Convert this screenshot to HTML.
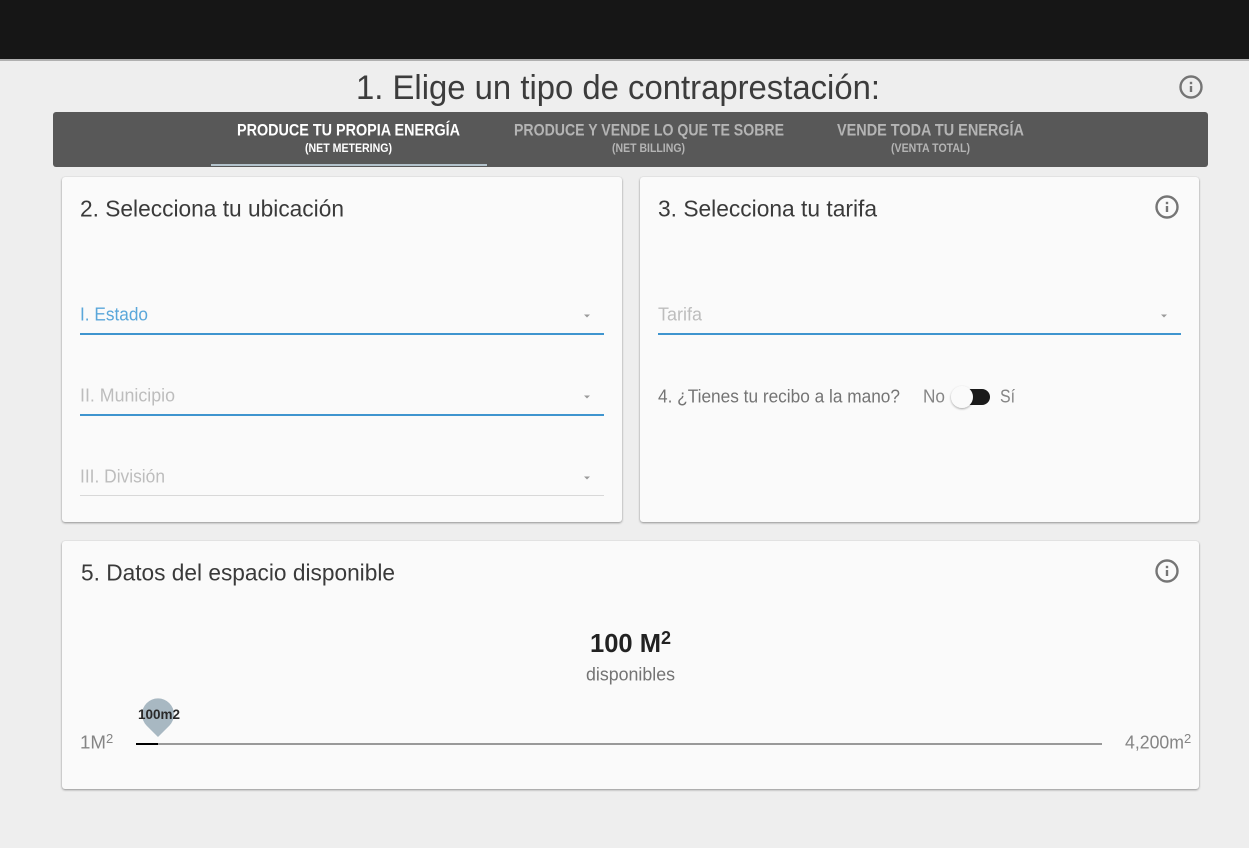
<!DOCTYPE html>
<html lang="es">
<head>
<meta charset="utf-8">
<title>Contraprestación</title>
<style>
html,body{margin:0;padding:0;width:1249px;height:848px;overflow:hidden;background:#eeeeee}
body{position:relative;font-family:"Liberation Sans",sans-serif}
.abs{position:absolute}
.card{position:absolute;background:#fafafa;border-radius:3px;box-shadow:0 1px 2px rgba(0,0,0,.38),0 0 1px rgba(0,0,0,.12)}
svg{position:absolute;left:0;top:0}
text{font-family:"Liberation Sans",sans-serif}
</style>
</head>
<body>
<div class="abs" style="left:0;top:0;width:1249px;height:59px;background:#161616"></div>
<div class="abs" style="left:0;top:59px;width:1249px;height:2px;background:#b0b0b0"></div>
<div class="abs" style="left:53px;top:112px;width:1155px;height:55px;background:#585858;border-radius:3px"></div>
<div class="abs" style="left:211px;top:164px;width:276px;height:2px;background:#b4c3cc"></div>
<div class="card" style="left:62px;top:177px;width:560px;height:345px"></div>
<div class="card" style="left:640px;top:177px;width:559px;height:345px"></div>
<div class="card" style="left:62px;top:541px;width:1137px;height:248px"></div>

<svg width="1249" height="848" viewBox="0 0 1249 848">
  <defs>
    <filter id="knob" x="-40%" y="-40%" width="180%" height="180%">
      <feDropShadow dx="0" dy="1" stdDeviation="1" flood-color="#000000" flood-opacity=".35"/>
    </filter>
  </defs>

  <!-- Heading -->
  <text x="356" y="99" font-size="34" fill="#3c3c3c" textLength="524" lengthAdjust="spacingAndGlyphs">1. Elige un tipo de contraprestación:</text>

  <!-- Tabs -->
  <text x="237" y="135.500" font-size="17" font-weight="700" fill="#ffffff" textLength="223" lengthAdjust="spacingAndGlyphs">PRODUCE TU PROPIA ENERGÍA</text>
  <text x="305" y="152" font-size="12" font-weight="700" fill="#ffffff" textLength="87" lengthAdjust="spacingAndGlyphs">(NET METERING)</text>
  <text x="514" y="135.500" font-size="17" font-weight="700" fill="#b4b4b4" textLength="270" lengthAdjust="spacingAndGlyphs">PRODUCE Y VENDE LO QUE TE SOBRE</text>
  <text x="612" y="152" font-size="12" font-weight="700" fill="#b4b4b4" textLength="73" lengthAdjust="spacingAndGlyphs">(NET BILLING)</text>
  <text x="837" y="135.500" font-size="17" font-weight="700" fill="#b4b4b4" textLength="187" lengthAdjust="spacingAndGlyphs">VENDE TODA TU ENERGÍA</text>
  <text x="891" y="152" font-size="12" font-weight="700" fill="#b4b4b4" textLength="79" lengthAdjust="spacingAndGlyphs">(VENTA TOTAL)</text>

  <!-- Card titles -->
  <text x="80" y="216.500" font-size="23" fill="#3a3a3a" textLength="264" lengthAdjust="spacingAndGlyphs">2. Selecciona tu ubicación</text>
  <text x="658" y="216.500" font-size="23" fill="#3a3a3a" textLength="219" lengthAdjust="spacingAndGlyphs">3. Selecciona tu tarifa</text>
  <text x="81" y="580.500" font-size="23" fill="#3a3a3a" textLength="314" lengthAdjust="spacingAndGlyphs">5. Datos del espacio disponible</text>

  <!-- Location fields -->
  <text x="80" y="320.500" font-size="18" fill="#5aa7da" textLength="68" lengthAdjust="spacingAndGlyphs">I. Estado</text>
  <rect x="80" y="333" width="524" height="2" fill="#3f95cf"/>
  <path d="M584 314.500h6l-3 3z" fill="#9a9a9a"/>
  <text x="80" y="401.500" font-size="18" fill="#bdbdbd" textLength="95" lengthAdjust="spacingAndGlyphs">II. Municipio</text>
  <rect x="80" y="414" width="524" height="2" fill="#3f95cf"/>
  <path d="M584 395.500h6l-3 3z" fill="#9a9a9a"/>
  <text x="80" y="482.500" font-size="18" fill="#bdbdbd" textLength="85" lengthAdjust="spacingAndGlyphs">III. División</text>
  <rect x="80" y="495" width="524" height="1" fill="#d8d8d8"/>
  <path d="M584 476.500h6l-3 3z" fill="#9a9a9a"/>

  <!-- Tariff field -->
  <text x="658" y="320.500" font-size="18" fill="#bdbdbd" textLength="44" lengthAdjust="spacingAndGlyphs">Tarifa</text>
  <rect x="658" y="333" width="523" height="2" fill="#3f95cf"/>
  <path d="M1161 314.500h6l-3 3z" fill="#9a9a9a"/>

  <!-- Receipt toggle -->
  <text x="658" y="402.500" font-size="18" fill="#747474" textLength="242" lengthAdjust="spacingAndGlyphs">4. ¿Tienes tu recibo a la mano?</text>
  <text x="923" y="402.500" font-size="18" fill="#858585" textLength="22" lengthAdjust="spacingAndGlyphs">No</text>
  <rect x="954" y="389" width="36" height="16" rx="8" fill="#1a1a1a"/>
  <circle cx="962" cy="397" r="11" fill="#fafafa" filter="url(#knob)"/>
  <text x="1000" y="402.500" font-size="18" fill="#858585" textLength="15" lengthAdjust="spacingAndGlyphs">Sí</text>

  <!-- Area value -->
  <text x="590" y="652" font-size="25.500" font-weight="700" fill="#222222" textLength="71" lengthAdjust="spacingAndGlyphs">100 M</text>
  <text x="661" y="644" font-size="18" font-weight="700" fill="#222222">2</text>
  <text x="586" y="680.500" font-size="18" fill="#747474" textLength="89" lengthAdjust="spacingAndGlyphs">disponibles</text>

  <!-- Slider -->
  <text x="80" y="748.500" font-size="18" fill="#858585" textLength="26" lengthAdjust="spacingAndGlyphs">1M</text>
  <text x="106" y="743" font-size="13" fill="#858585">2</text>
  <rect x="136" y="743" width="966" height="2" fill="#999999"/>
  <rect x="136" y="743" width="22" height="2" fill="#000000"/>
  <path d="M158 737 L146.700 725.700 A16 16 0 1 1 169.300 725.700 Z" fill="#a8b8c2"/>
  <text x="138" y="719" font-size="14" font-weight="700" fill="#2a2a2a" textLength="42" lengthAdjust="spacingAndGlyphs">100m2</text>
  <text x="1125" y="748.500" font-size="18" fill="#858585" textLength="59" lengthAdjust="spacingAndGlyphs">4,200m</text>
  <text x="1184" y="743" font-size="13" fill="#858585">2</text>

  <!-- Info icons -->
  <g fill="none" stroke="#757575" stroke-width="2.400">
    <circle cx="1191" cy="87" r="10.500"/>
    <circle cx="1167" cy="207" r="10.500"/>
    <circle cx="1167" cy="571" r="10.500"/>
  </g>
  <g fill="#757575">
    <rect x="1189.800" y="86" width="2.400" height="6"/><rect x="1189.800" y="81.800" width="2.400" height="2.400"/>
    <rect x="1165.800" y="206" width="2.400" height="6"/><rect x="1165.800" y="201.800" width="2.400" height="2.400"/>
    <rect x="1165.800" y="570" width="2.400" height="6"/><rect x="1165.800" y="565.800" width="2.400" height="2.400"/>
  </g>
</svg>
</body>
</html>
